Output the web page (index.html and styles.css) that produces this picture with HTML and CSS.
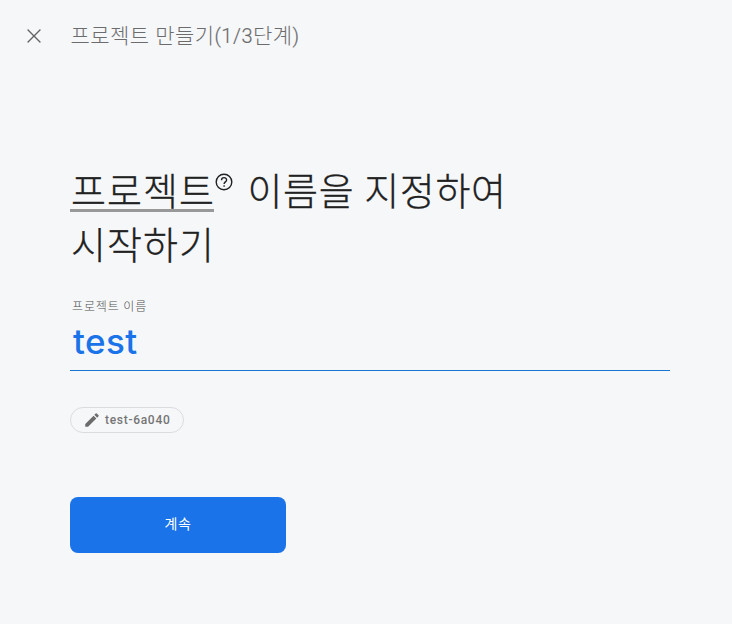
FILE: index.html
```html
<!DOCTYPE html>
<html lang="ko">
<head>
<meta charset="utf-8">
<title>프로젝트 만들기</title>
<link rel="stylesheet" href="styles.css">
</head>
<body>
<header class="topbar">
  <svg class="close" viewBox="0 0 24 24"><path d="M18.700 6.100 17.900 5.300 12 11.200 6.100 5.300 5.300 6.100 11.200 12 5.300 17.900 6.100 18.700 12 12.800 17.900 18.700 18.700 17.900 12.800 12z"/></svg>
  <span class="step">프로젝트 만들기<span class="count">(1/3</span>단계<span class="count">)</span></span>
</header>
<main class="content">
  <h1 class="title"><span class="term">프로젝트</span><svg class="help" viewBox="0 0 20 20"><circle cx="10" cy="10" r="7.800"/><path d="M7.500 8.300C7.500 4.700 12.600 4.900 12.600 8C12.600 9.900 10.100 9.900 10.100 12M10.100 13.200V14.700"/></svg><span class="rest">이름을 지정하여</span><br><span class="line">시작하기</span></h1>
  <label class="label">프로젝트 이름</label>
  <div class="field">test</div>
  <div class="chip"><svg class="pencil" viewBox="0 0 24 24"><path d="M3 17.250V21h3.750L17.810 9.940l-3.750-3.750L3 17.250zM20.710 7.040a1 1 0 0 0 0-1.410l-2.340-2.340a1 1 0 0 0-1.410 0l-1.830 1.830 3.750 3.750 1.830-1.830z"/></svg>test-6a040</div>
  <button class="next">계속</button>
</main>
</body>
</html>
```
FILE: styles.css
```css
body {
  margin: 0;
  background: #f6f7f9;
  font-family: Roboto, "Noto Sans CJK KR", sans-serif;
}
.topbar {
  display: flex;
  align-items: center;
  height: 72px;
  padding-left: 22px;
  color: #6c6c6c;
}
.close { width: 24px; height: 24px; fill: #606060; stroke: #606060; stroke-width: .3; }
.step {
  margin: 0 0 5px 24.5px;
  font-size: 21px;
  font-weight: 300;
  letter-spacing: .45px;
}
.count { font-size: 20px; letter-spacing: .5px; -webkit-text-stroke: .2px #6c6c6c; }
.content {
  display: flex;
  flex-direction: column;
  align-items: flex-start;
  padding: 92px 62px 0 70px;
}
.title {
  margin: 0;
  padding-top: 1px;
  font-size: 38px;
  line-height: 54px;
  font-weight: 300;
  letter-spacing: 1px;
  -webkit-text-stroke: .3px #212121;
  color: #212121;
  white-space: nowrap;
}
.term {
  display: inline-block;
  box-sizing: border-box;
  width: 144px;
  height: 47px;
  padding-left: 1px;
  border-bottom: 3px solid #999;
}
.help {
  width: 20px;
  height: 20px;
  vertical-align: 13px;
  fill: none;
  stroke: #212121;
  stroke-width: 1.4;
}
.rest { margin-left: 13.5px; letter-spacing: .65px; }
.line { margin-left: 1px; }
.label {
  margin: 25px 0 0 2px;
  font-size: 12px;
  line-height: 18px;
  font-weight: 300;
  letter-spacing: .85px;
  color: #505050;
}
.field {
  box-sizing: border-box;
  width: 600px;
  height: 55px;
  padding-left: 3px;
  border-bottom: 1px solid #1976d2;
  font: 500 35px/51px Inter, sans-serif;
  letter-spacing: .4px;
  color: #1a73e8;
}
.chip {
  box-sizing: border-box;
  display: flex;
  align-items: center;
  width: 114px;
  height: 26px;
  margin-top: 36px;
  padding-left: 12px;
  border: 1px solid #dadce0;
  border-radius: 13px;
  font-size: 12px;
  font-weight: 500;
  letter-spacing: .7px;
  color: #757575;
}
.pencil { width: 18px; height: 18px; margin-right: 4px; fill: #6c6c6c; }
.next {
  width: 216px;
  height: 56px;
  margin-top: 64px;
  padding: 0 0 4px;
  border: 0;
  border-radius: 8px;
  background: #1a73e8;
  color: #fff;
  font: 400 14px Roboto, "Noto Sans CJK KR", sans-serif;
  letter-spacing: .6px;
}
```
